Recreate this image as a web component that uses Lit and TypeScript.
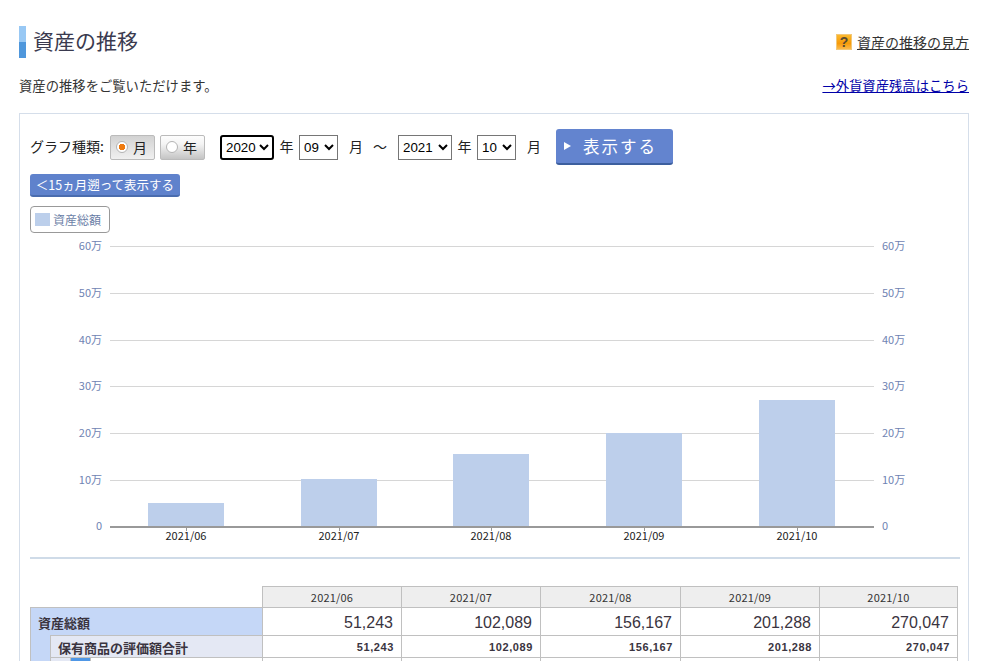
import { LitElement, css, html, svg } from 'lit'
import { customElement } from 'lit/decorators.js'

const MONTHS = ['2021/06', '2021/07', '2021/08', '2021/09', '2021/10']
const TOTALS = ['51,243', '102,089', '156,167', '201,288', '270,047']
const COLS = [139, 139, 140, 139, 138]

const GRID = [
  { y: 246, label: '60万' },
  { y: 293, label: '50万' },
  { y: 340, label: '40万' },
  { y: 386, label: '30万' },
  { y: 433, label: '20万' },
  { y: 480, label: '10万' },
]

const BARS = [
  { x: 148, top: 503 },
  { x: 301, top: 479 },
  { x: 453, top: 454 },
  { x: 606, top: 433 },
  { x: 759, top: 400 },
]

const range = (from: number, to: number, pad = false) => {
  const out: string[] = []
  for (let i = from; i <= to; i++) out.push(pad ? String(i).padStart(2, '0') : String(i))
  return out
}

@customElement('app-root')
export class AppRoot extends LitElement {
  static styles = css`
    :host {
      display: block;
      height: 661px;
      overflow: hidden;
      background: #fff;
      color: #333;
      font-family: "Noto Sans CJK JP", sans-serif;
      font-size: 13.33px;
    }

    .page {
      padding: 26px 14px 0 19px;
    }

    .head {
      display: flex;
      align-items: center;
      justify-content: space-between;
      height: 32px;
    }

    h1 {
      margin: 0;
      padding: 0 0 3px 7px;
      font-size: 21px;
      font-weight: 400;
      line-height: 29px;
      color: #3a3a4f;
      border-left: 7px solid #69a9e4;
      border-image: linear-gradient(#98c8f4 0 50%, #4f97dc 50% 100%) 1;
    }

    .help {
      display: flex;
      align-items: center;
      gap: 5px;
      font-size: 14px;
      color: #333;
    }

    .help a {
      color: inherit;
      text-decoration: underline;
    }

    .q {
      width: 16px;
      height: 16px;
      text-align: center;
      font: 700 14px/15px "Liberation Sans", sans-serif;
      color: #5a4a30;
      background: linear-gradient(#fbb92e, #f79a08 60%, #fbb94a);
      border: 1px solid #f3c878;
      box-sizing: border-box;
    }

    .sub {
      display: flex;
      justify-content: space-between;
      align-items: center;
      height: 20px;
      margin-top: 17px;
    }

    .sub a {
      color: #0000a8;
      text-decoration: underline;
    }

    .panel {
      margin-top: 18px;
      border: 1px solid #d5deea;
      height: 600px;
    }

    .form {
      display: flex;
      align-items: center;
      height: 36px;
      margin: 15px 0 0 10px;
      color: #222;
      font-size: 14px;
    }

    .form > span {
      position: relative;
      top: -1px;
    }

    .form .kind {
      width: 80px;
    }

    .seg {
      display: flex;
      align-items: center;
      gap: 5px;
      box-sizing: border-box;
      width: 45px;
      height: 25px;
      padding-left: 5px;
      margin-right: 5px;
      border: 1px solid #bbb;
      border-radius: 2px;
      background: linear-gradient(#fdfdfd, #f4f4f4 35%, #c4c4c4);
    }

    .seg.on {
      background: linear-gradient(#d2d2d2, #f0f0f0);
    }

    .dot {
      box-sizing: border-box;
      width: 12px;
      height: 12px;
      border: 1px solid #b4b4b4;
      border-radius: 50%;
      background: #fff;
    }

    .seg.on .dot {
      background: radial-gradient(circle, #ee7a10 0 3px, #fff 3.5px);
    }

    select {
      box-sizing: border-box;
      height: 25px;
      font-family: "Liberation Sans", sans-serif;
      font-size: 13.33px;
      background: #fff;
      color: #000;
      padding: 0;
    }

    .y {
      width: 54px;
    }

    .m {
      width: 39px;
    }

    select.focus {
      border: 2px solid #000;
      border-radius: 3px;
      outline: none;
    }

    .unit-y {
      width: 25px;
      text-align: center;
    }

    .form > .gap {
      margin-left: 10px;
    }

    .unit-m {
      margin-left: 11px;
      width: 14px;
    }

    .tilde {
      margin: 0 11px 0 10px;
      width: 14px;
    }

    .go {
      box-sizing: border-box;
      display: flex;
      align-items: center;
      width: 117px;
      height: 36px;
      margin-left: 15px;
      padding: 0 0 1px 8px;
      color: #fff;
      background: #6384cf;
      border: 0;
      border-bottom: 2px solid #3c5f9e;
      border-radius: 3px;
      font-family: inherit;
      font-size: 16.5px;
      letter-spacing: 2px;
    }

    .go i {
      width: 0;
      height: 0;
      margin-right: 12px;
      border-left: 7px solid #fff;
      border-top: 4px solid transparent;
      border-bottom: 4px solid transparent;
    }

    .back {
      display: block;
      box-sizing: border-box;
      width: 150px;
      height: 23px;
      margin: 9px 0 0 10px;
      padding: 0;
      color: #fff;
      text-align: center;
      background: #5f82cc;
      border: 0;
      border-bottom: 2px solid #4a6cae;
      border-radius: 3px;
      font-family: inherit;
      font-size: 12.5px;
      line-height: 20px;
    }

    .legend {
      box-sizing: border-box;
      display: flex;
      align-items: center;
      gap: 3px;
      width: 80px;
      height: 27px;
      margin: 9px 0 0 10px;
      padding-left: 4px;
      border: 1px solid #999;
      border-radius: 4px;
      font-size: 12px;
      color: #6c7fa8;
    }

    .legend i {
      width: 15px;
      height: 13px;
      background: #bccfeb;
    }

    svg {
      display: block;
    }

    svg text {
      font-family: "Noto Sans CJK JP", sans-serif;
      font-size: 11px;
    }

    .tick {
      fill: #6f83b3;
    }

    .month {
      fill: #222;
    }

    .rule {
      height: 2px;
      margin: 8px 8px 0 10px;
      background: #cfdbe8;
    }

    table {
      width: 927px;
      margin: 27px 0 0 10px;
      border-collapse: collapse;
      table-layout: fixed;
      color: #3a3440;
    }

    td,
    th {
      box-sizing: border-box;
      padding: 0;
      border: 1px solid #c0c0c0;
    }

    th {
      height: 21px;
      background: #eee;
      font-size: 11px;
      font-weight: 400;
      letter-spacing: 0.2px;
      color: #333;
    }

    th.blank {
      background: none;
      border: 0;
    }

    .total td {
      height: 28px;
    }

    .total .name {
      padding: 1px 0 0 7px;
      background: #c5d7f7;
      font-size: 13px;
      font-weight: 700;
    }

    .total .num {
      padding: 2px 8px 0 0;
      text-align: right;
      font: 16px "Liberation Sans", sans-serif;
    }

    .held td {
      height: 22px;
    }

    .held .name {
      padding: 1px 0 0 7px;
      background: #e4e8f4;
      font-size: 13px;
      font-weight: 700;
    }

    .held .num {
      padding: 1px 7px 0 0;
      text-align: right;
      font: 700 11px "Liberation Sans", sans-serif;
      letter-spacing: 0.6px;
    }

    td.outer {
      background: #c5d7f7;
      border-top: hidden;
    }

    .inner {
      background: #e4e8f4;
    }

    .mark {
      background: #4f97e6;
    }

    .next td {
      height: 24px;
    }
  `

  private chart() {
    return svg`
      ${GRID.map(g => svg`
        <line x1="110" x2="874" y1=${g.y + 0.5} y2=${g.y + 0.5} stroke="#d6d6d6" />
        <text class="tick" x="102" y=${g.y + 4} text-anchor="end">${g.label}</text>
        <text class="tick" x="882" y=${g.y + 4}>${g.label}</text>
      `)}
      <text class="tick" x="102" y="530" text-anchor="end">0</text>
      <text class="tick" x="882" y="530">0</text>
      ${BARS.map((b, i) => svg`
        <rect x=${b.x} y=${b.top} width="76" height=${526 - b.top} fill="#bdcfeb" />
        <line x1=${b.x + 38.5} x2=${b.x + 38.5} y1="527" y2="531" stroke="#999" />
        <text class="month" x=${b.x + 38} y="540" text-anchor="middle">${MONTHS[i]}</text>
      `)}
      <rect x="110" y="526" width="764" height="2" fill="#999" />
    `
  }

  private select(cls: string, items: string[], value: string) {
    return html`<select class=${cls}>
      ${items.map(v => html`<option ?selected=${v === value}>${v}</option>`)}
    </select>`
  }

  render() {
    const years = range(2015, 2021)
    const months = range(1, 12, true)
    return html`
      <div class="page">
        <div class="head">
          <h1>資産の推移</h1>
          <div class="help">
            <span class="q">?</span>
            <a href="#">資産の推移の見方</a>
          </div>
        </div>
        <div class="sub">
          <span>資産の推移をご覧いただけます。</span>
          <a href="#">→外貨資産残高はこちら</a>
        </div>

        <div class="panel">
          <div class="form">
            <span class="kind">グラフ種類:</span>
            <label class="seg on"><span class="dot"></span>月</label>
            <label class="seg"><span class="dot"></span>年</label>
            <span class="gap"></span>
            ${this.select('y focus', years, '2020')}
            <span class="unit-y">年</span>
            ${this.select('m', months, '09')}
            <span class="unit-m">月</span>
            <span class="tilde">～</span>
            ${this.select('y', years, '2021')}
            <span class="unit-y">年</span>
            ${this.select('m', months, '10')}
            <span class="unit-m">月</span>
            <button class="go"><i></i>表示する</button>
          </div>
          <button class="back">＜15ヵ月遡って表示する</button>
          <div class="legend"><i></i>資産総額</div>

          <svg width="948" height="316" viewBox="20 233 948 316">${this.chart()}</svg>
          <div class="rule"></div>

          <table>
            <colgroup>
              <col style="width:20px" />
              <col style="width:20px" />
              <col style="width:20px" />
              <col style="width:172px" />
              ${COLS.map(w => html`<col style="width:${w}px" />`)}
            </colgroup>
            <tr>
              <th class="blank" colspan="4"></th>
              ${MONTHS.map(m => html`<th>${m}</th>`)}
            </tr>
            <tr class="total">
              <td class="name" colspan="4">資産総額</td>
              ${TOTALS.map(v => html`<td class="num">${v}</td>`)}
            </tr>
            <tr class="held">
              <td class="outer" rowspan="2"></td>
              <td class="name" colspan="3">保有商品の評価額合計</td>
              ${TOTALS.map(v => html`<td class="num">${v}</td>`)}
            </tr>
            <tr class="next">
              <td class="inner"></td>
              <td class="mark"></td>
              <td></td>
              ${MONTHS.map(() => html`<td></td>`)}
            </tr>
          </table>
        </div>
      </div>
    `
  }
}
